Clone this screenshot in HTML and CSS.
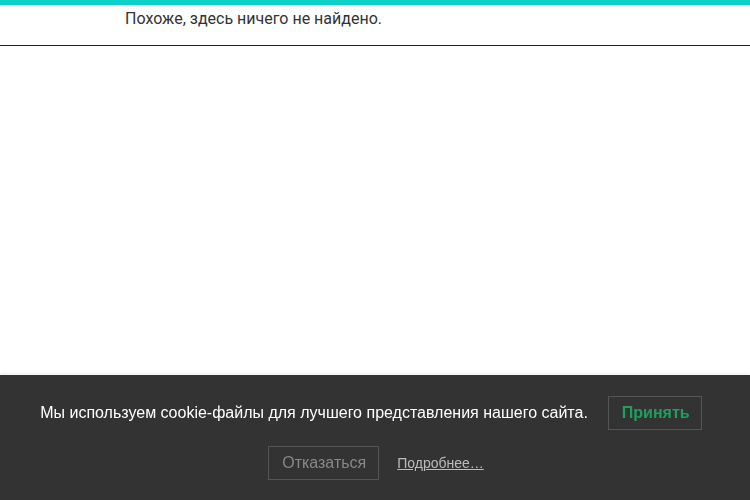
FILE: index.html
```html
<!DOCTYPE html>
<html lang="ru">
<head>
    <meta charset="UTF-8" />
    <meta name="viewport" content="width=device-width, initial-scale=1.0" />
    <title>Страница не найдена</title>
    <link rel="stylesheet" href="styles.css">
</head>
<body>
    <header id="pageHeader">
        <p class="not-found">Похоже, здесь ничего не найдено.</p>
    </header>

    <div id="cookieBar">
        <div class="cookie-row main">
            <span class="cookie-text">Мы используем cookie-файлы для лучшего представления нашего сайта.</span>
            <button class="cookie-btn accept">Принять</button>
        </div>
        <div class="cookie-row extra">
            <button class="cookie-btn decline">Отказаться</button>
            <a class="cookie-more" href="#">Подробнее…</a>
        </div>
    </div>
</body>
</html>
```

FILE: styles.css
```css
body { margin: 0; background: #fff; font-family: Roboto, "Liberation Sans", sans-serif; height: 100vh; overflow: hidden; }

#pageHeader {
    border-top: 5px solid #0dd1c8;
    border-bottom: 1px solid #222;
    height: 40px;
    padding-left: 125px;
    box-sizing: content-box;
}
.not-found {
    margin: 0;
    padding-top: 4px;
    font-size: 16px;
    line-height: 19px;
    color: #333;
}

#cookieBar {
    position: fixed; /* sits over the page at the bottom */
    left: 0;
    right: 0;
    bottom: 0;
    height: 125px;
    box-sizing: border-box;
    padding: 21px 0 20px;
    background: #333;
    box-shadow: 0 -2px 3px rgba(0, 0, 0, 0.06);
    font-family: "Liberation Sans", Arial, sans-serif;
    display: flex;
    flex-direction: column;
    gap: 16px;
}
.cookie-row {
    display: flex;
    justify-content: center;
    align-items: center;
    height: 34px;
}
.cookie-row.main { padding-right: 8px; }
.cookie-row.extra { padding-left: 2px; }
.cookie-text {
    color: #fff;
    font-size: 16px;
    margin-right: 20px;
}
.cookie-btn {
    height: 34px;
    box-sizing: border-box;
    background: transparent;
    border: 1px solid #555;
    font-family: inherit;
    font-size: 16px;
    padding: 0 13px;
    cursor: pointer;
}
.cookie-btn.accept { color: #1e9f5e; font-weight: bold; width: 94px; }
.cookie-btn.decline { color: #888; width: 111px; }
.cookie-more {
    margin-left: 18px;
    color: #bbb;
    font-size: 14px;
    text-decoration: underline;
}
```
